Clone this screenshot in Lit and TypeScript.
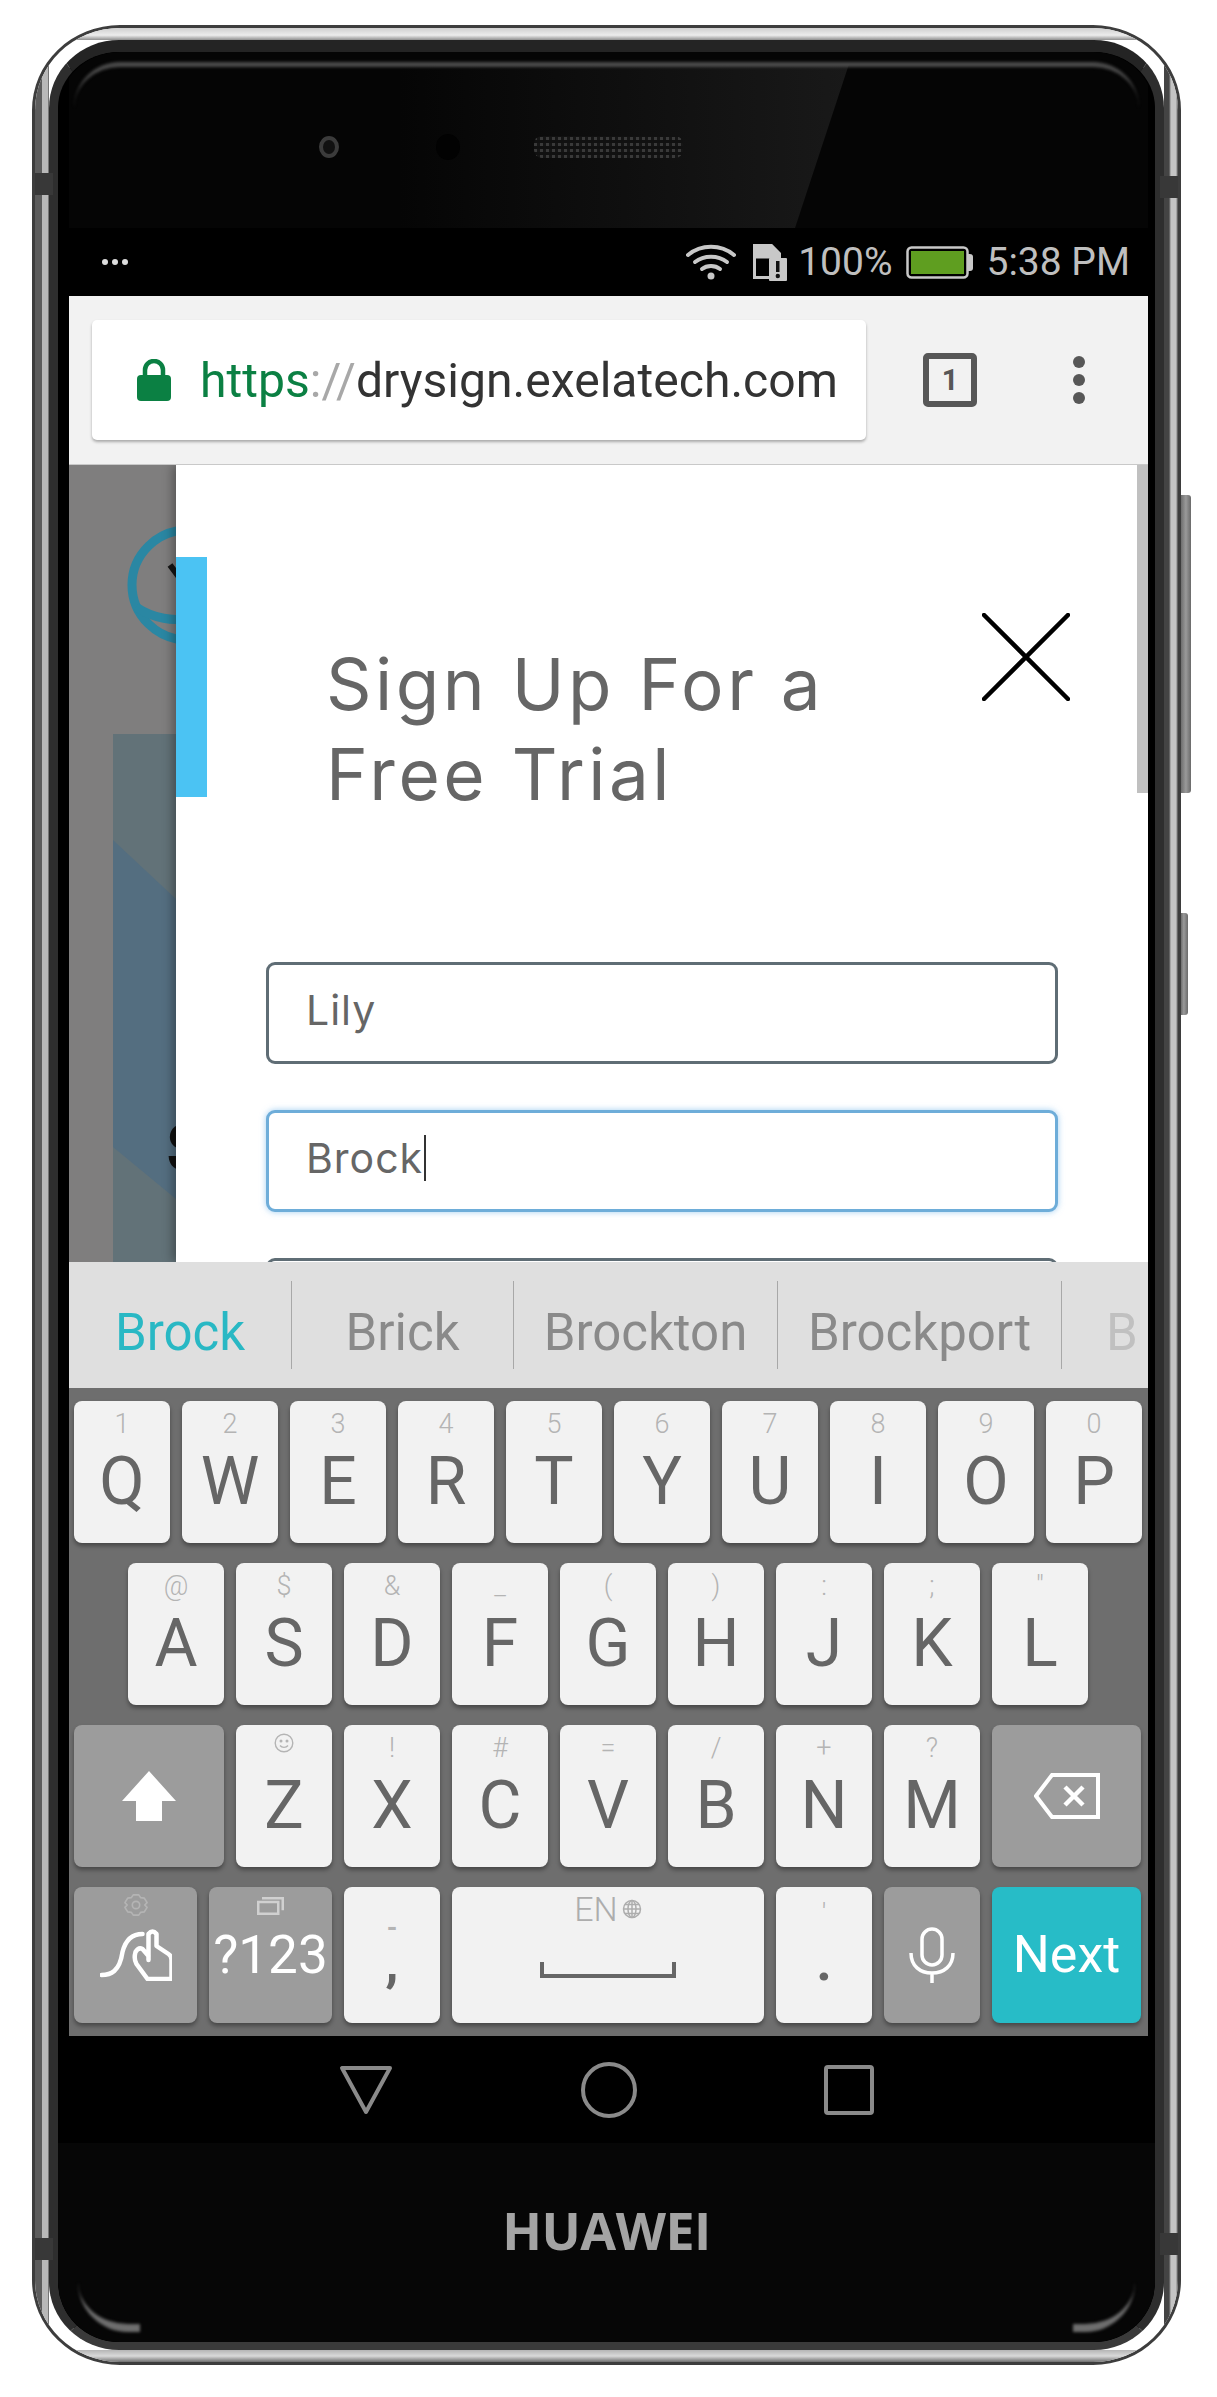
import { LitElement, css, html, svg } from 'lit'
import { customElement } from 'lit/decorators.js'

type Key = { main: string; hint: string }

const toKeys = (mains: string, hints: string[]): Key[] =>
  mains.split('').map((main, i) => ({ main, hint: hints[i] }))

const ROW_1 = toKeys('QWERTYUIOP', ['1', '2', '3', '4', '5', '6', '7', '8', '9', '0'])
const ROW_2 = toKeys('ASDFGHJKL', ['@', '$', '&', '_', '(', ')', ':', ';', '"'])
const ROW_3 = toKeys('ZXCVBNM', ['', '!', '#', '=', '/', '+', '?'])

const SUGGESTIONS = [
  { word: 'Brock', width: 223, active: true },
  { word: 'Brick', width: 222 },
  { word: 'Brockton', width: 264 },
  { word: 'Brockport', width: 284 },
]

// dark breaks in the metal frame
const ANTENNA_BANDS = ['left:0;top:145px', 'right:0;top:148px', 'left:0;top:2210px', 'right:0;top:2205px']

const icons = {
  wifi: svg`<svg width="50" height="36" viewBox="0 0 50 36" fill="none" stroke="#c8c8c8" stroke-width="4" stroke-linecap="round"><path d="M2 11c13-11 33-11 46 0"/><path d="M9 18c9-7 23-7 32 0"/><path d="M16 25c5-4 13-4 18 0"/><circle cx="25" cy="32" r="3.500" fill="#c8c8c8" stroke="none"/></svg>`,
  sim: svg`<svg width="34" height="37" viewBox="0 0 34 37" fill="none"><path d="M1.500 1.500h17l8 8v24h-25z" stroke="#c8c8c8" stroke-width="3" fill="none"/><path d="M1.500 1.500h17l8 8v5h-25z" fill="#c8c8c8"/><rect x="16" y="14" width="18" height="23" rx="1" fill="#c8c8c8"/><rect x="23" y="17" width="3.500" height="11" fill="#111"/><circle cx="24.800" cy="32" r="2.200" fill="#111"/></svg>`,
  battery: svg`<svg width="68" height="33" viewBox="0 0 68 33" fill="none"><rect x="1.500" y="1.500" width="60" height="30" rx="4" stroke="#c8c8c8" stroke-width="2.500" fill="#000"/><rect x="5" y="5" width="53" height="23" fill="#5f9e20"/><path d="M62 8h2a3 3 0 0 1 3 3v11a3 3 0 0 1-3 3h-2z" fill="#c8c8c8"/></svg>`,
  lock: svg`<svg width="34" height="42" viewBox="0 0 34 42"><path d="M8 17v-6a9 9 0 0 1 18 0v6" fill="none" stroke="#0b8043" stroke-width="4.500"/><rect x="0" y="16" width="34" height="26" rx="4" fill="#0b8043"/></svg>`,
  close: svg`<svg width="88" height="88" viewBox="0 0 88 88" stroke="#000" stroke-width="4.500" stroke-linecap="round"><path d="M2 2l84 84M86 2L2 86"/></svg>`,
  shift: svg`<svg width="54" height="50" viewBox="0 0 54 50" fill="#fff"><path d="M27 0l27 30H40v20H14V30H0z"/></svg>`,
  backspace: svg`<svg width="66" height="46" viewBox="0 0 66 46" fill="none" stroke="#fff" stroke-width="4"><path d="M64 2H18L2 23l16 21h46z"/><path d="M31 14l18 18M49 14L31 32" stroke-width="4.500"/></svg>`,
  swipe: svg`<svg width="72" height="52" viewBox="-0.500 -1 72 52" fill="none" stroke="#fff" stroke-width="4.500" stroke-linejoin="round" stroke-linecap="round"><path d="M1 45c9 0 18-3 21-23 3-12 10-18 20-18"/><path d="M48 30V4q4-5 8 0v12l12 8q3 2 3 6v19H47L36 34q-3-5-1-12 3-5 7-3l6 7"/></svg>`,
  gear: svg`<svg width="24" height="24" viewBox="-1 -1 26 26" fill="none" stroke="#b4b4b4" stroke-width="1.800" stroke-linejoin="round"><path d="M9 1h6l2 3 4 .5 3 5-2.500 2.500 2.500 2.500-3 5-4 .5-2 3H9l-2-3-4-.5-3-5L2.500 12 0 9.500l3-5 4-.5z"/><circle cx="12" cy="12" r="4"/></svg>`,
  windows: svg`<svg width="27" height="18" viewBox="0 0 27 18" fill="none" stroke="#d0d0d0" stroke-width="2.500"><rect x="1.250" y="5" width="20" height="11.750"/><path d="M5 1.250h20.750v12"/></svg>`,
  globe: svg`<svg width="20" height="20" viewBox="0 0 20 20" fill="none" stroke="#adadad" stroke-width="1.500"><circle cx="10" cy="10" r="8.500"/><ellipse cx="10" cy="10" rx="4" ry="8.500"/><path d="M10 1.500v17M1.500 10h17M3 5.500h14M3 14.500h14"/></svg>`,
  smiley: svg`<svg width="20" height="20" viewBox="0 0 20 20" fill="none" stroke="#b4b4b4" stroke-width="1.400"><circle cx="10" cy="10" r="8.800"/><circle cx="7" cy="8" r=".8"/><circle cx="13" cy="8" r=".8"/><path d="M6 12.500c2 2.500 6 2.500 8 0"/></svg>`,
  spacebar: svg`<svg width="136" height="16" viewBox="0 0 136 16" fill="none" stroke="#666" stroke-width="4"><path d="M2 0v14h132V0"/></svg>`,
  mic: svg`<svg width="46" height="56" viewBox="0 0 46 56" fill="none" stroke="#fff" stroke-width="3.500"><rect x="13" y="2" width="20" height="36" rx="10"/><path d="M2 26c0 13 9 20 21 20s21-7 21-20M23 46v10"/></svg>`,
  back: svg`<svg width="54" height="50" viewBox="0 0 54 50" fill="none" stroke="#8a8a8a" stroke-width="4" stroke-linejoin="round"><path d="M3 3h48L27 47z"/></svg>`,
  home: svg`<svg width="56" height="56" viewBox="0 0 56 56" fill="none" stroke="#8a8a8a" stroke-width="4"><circle cx="28" cy="28" r="26"/></svg>`,
  recent: svg`<svg width="50" height="50" viewBox="0 0 50 50" fill="none" stroke="#8a8a8a" stroke-width="4" stroke-linejoin="round"><rect x="2" y="2" width="46" height="46" rx="2"/></svg>`,
  logo: svg`<svg width="120" height="122" viewBox="0 0 120 122" fill="none" stroke="#2a87a3" stroke-width="9"><ellipse cx="62" cy="60" rx="56" ry="55"/><path d="M10 82c18 12 36 14 60 12"/><path d="M44 40l6 8 6-8" stroke="#151515" stroke-width="6"/></svg>`,
}

@customElement('app-root')
export class AppRoot extends LitElement {
  static styles = css`
    :host {
      display: block;
      width: 1217px;
      height: 2397px;
      background: #fff;
      font-family: Roboto, 'Liberation Sans', sans-serif;
      overflow: hidden;
    }
    .canvas {
      position: relative;
      box-sizing: border-box;
      height: 2397px;
      padding: 25px 0 0 32px;
    }
    .side-btn {
      position: absolute;
      left: 1174px;
      border-radius: 3px;
      background: linear-gradient(90deg, #444 0 7px, #6e6e6e 7px, #9a9a9a 70%, #6a6a6a);
    }
    .side-btn.upper { top: 495px; height: 298px; width: 17px; }
    .side-btn.lower { top: 913px; height: 102px; width: 14px; }
    .phone {
      position: relative;
      width: 1149px;
      height: 2340px;
      box-sizing: border-box;
      border: 3px solid #3d3d3d;
      border-radius: 88px / 85px;
      overflow: hidden;
    }
    .rim {
      height: 100%;
      box-sizing: border-box;
      padding: 12px 14px;
      background:
        linear-gradient(180deg, #cfcfcf, #ececec 60%, #8f8f8f) top / 100% 12px no-repeat,
        linear-gradient(0deg, #6f6f6f, #d9d9d9 50%, #b5b5b5) bottom / 100% 12px no-repeat,
        linear-gradient(90deg, #5c5c5c 0 7px, #b8b8b8 7px 13px, #333 14px) left / 14px 100% no-repeat,
        linear-gradient(90deg, #444 0 5px, #c4c4c4 7px 12px, #444 14px) right / 14px 100% no-repeat;
    }
    .band {
      position: absolute;
      width: 18px;
      height: 22px;
      background: #383838;
    }
    .bevel {
      height: 100%;
      box-sizing: border-box;
      border-style: solid;
      border-width: 12px 9px 8px;
      border-color: #242424 #2e2e2e #3a3a3a;
      border-radius: 70px / 68px;
      overflow: hidden;
      background: #000;
    }
    .body {
      position: relative;
      height: 100%;
      padding: 0 7px 0 11px;
      background: #000;
      border-radius: 62px / 60px;
      display: flex;
      flex-direction: column;
      overflow: hidden;
    }
    .gloss {
      position: absolute;
      filter: blur(1.500px);
    }
    .gloss.top {
      left: 16px;
      right: 16px;
      top: 10px;
      height: 50px;
      border-top: 5px solid #4a4a4a;
      border-radius: 46px 46px 0 0;
    }
    .gloss.bottom-left,
    .gloss.bottom-right {
      bottom: 10px;
      width: 62px;
      height: 48px;
      border-bottom: 8px solid #6e6e6e;
    }
    .gloss.bottom-left { left: 20px; border-bottom-left-radius: 50px; }
    .gloss.bottom-right { right: 20px; border-bottom-right-radius: 50px; }
    .earpiece {
      position: relative;
      height: 176px;
      flex: none;
      box-sizing: border-box;
      padding-top: 14px;
      display: flex;
      align-items: center;
      background: #050505;
    }
    .glare {
      position: absolute;
      left: 330px;
      top: 12px;
      width: 450px;
      height: 164px;
      clip-path: polygon(0 0, 100% 0, 88% 100%, 0 100%);
      background: linear-gradient(90deg, rgba(30, 30, 30, 0), #191919);
    }
    .lens {
      position: relative;
      width: 20px;
      height: 22px;
      margin-left: 250px;
      border-radius: 50%;
      border: 4px solid #3b3b3b;
      background: #111;
      box-sizing: border-box;
    }
    .sensor {
      position: relative;
      width: 24px;
      height: 26px;
      margin-left: 97px;
      border-radius: 50%;
      background: #020202;
    }
    .grille {
      position: relative;
      width: 149px;
      height: 22px;
      margin-left: 74px;
      border-radius: 8px;
      background:
        repeating-linear-gradient(0deg, transparent 0 3px, #111 3px 6px),
        repeating-linear-gradient(90deg, #3a3a3a 0 3px, #151515 3px 6px);
    }
    .status {
      height: 68px;
      flex: none;
      box-sizing: border-box;
      display: flex;
      align-items: center;
      color: #bfbfbf;
      font-size: 39px;
      font-weight: 400;
      padding: 0 18px 0 33px;
      white-space: nowrap;
    }
    .dots {
      flex: 1;
      display: flex;
      gap: 4px;
    }
    .dots span {
      width: 6px;
      height: 6px;
      border-radius: 50%;
      background: #ddd;
    }
    .status svg { display: block; }
    .status .sim { margin: 0 11px 0 17px; }
    .status .battery { margin: 0 12px 0 14px; }
    .chrome {
      height: 169px;
      flex: none;
      box-sizing: border-box;
      padding: 0 0 0 23px;
      display: flex;
      align-items: center;
      background: #f2f2f2;
      border-bottom: 1px solid #c9c9c9;
    }
    .omnibox {
      width: 774px;
      height: 120px;
      box-sizing: border-box;
      padding: 0 0 0 45px;
      display: flex;
      align-items: center;
      background: #fff;
      border-radius: 5px;
      box-shadow: 0 2px 3px rgba(0, 0, 0, 0.3);
      font-size: 48.100px;
      color: #333;
      white-space: nowrap;
    }
    .omnibox svg { margin-right: 29px; flex: none; }
    .scheme { color: #0b8043; }
    .slashes { color: #a8a8a8; }
    .tabs {
      margin-left: 57px;
      width: 54px;
      height: 54px;
      flex: none;
      box-sizing: border-box;
      border: 6px solid #575757;
      border-radius: 5px;
      display: flex;
      align-items: center;
      justify-content: center;
      color: #575757;
      font-size: 29px;
      font-weight: 700;
    }
    .menu {
      margin-left: 96px;
      display: flex;
      flex-direction: column;
      gap: 6px;
    }
    .menu span {
      width: 12px;
      height: 12px;
      border-radius: 50%;
      background: #575757;
    }
    .page {
      height: 797px;
      flex: none;
      display: flex;
      overflow: hidden;
    }
    .backdrop {
      position: relative;
      width: 107px;
      flex: none;
      overflow: hidden;
      background: #7f7e7e;
    }
    .logo {
      position: absolute;
      left: 57px;
      top: 60px;
    }
    .hero {
      position: absolute;
      left: 44px;
      top: 269px;
      width: 63px;
      height: 528px;
      background: #627278;
    }
    .hero-band {
      height: 100%;
      clip-path: polygon(0 106px, 100% 165px, 100% 465px, 0 413px);
      background: #546e80;
    }
    .hero-letter {
      position: absolute;
      left: 97px;
      top: 644px;
      color: #111;
      font-size: 63px;
      line-height: 76px;
      font-weight: 700;
      font-family: Inter, sans-serif;
    }
    .modal {
      flex: 1;
      display: flex;
      background: #fff;
      position: relative;
      box-shadow: -3px 0 10px rgba(0, 0, 0, 0.35);
    }
    .strip {
      width: 31px;
      height: 240px;
      margin-top: 92px;
      flex: none;
      background: #4bc3f3;
    }
    .scrollbar {
      position: absolute;
      right: 0;
      top: 0;
      width: 11px;
      height: 328px;
      background: #c0c0c0;
    }
    .modal-body {
      flex: 1;
      padding: 0 0 0 59px;
    }
    .heading-row {
      display: flex;
      align-items: flex-start;
      height: 497px;
      box-sizing: border-box;
      padding: 174px 0 0 60px;
    }
    .heading-row h1 {
      flex: 1;
      margin: 0;
      font-weight: 400;
      font-size: 71px;
      line-height: 90px;
      letter-spacing: 3.500px;
      color: #666;
      font-family: Inter, sans-serif;
    }
    .close {
      margin: -26px 78px 0 0;
      display: block;
    }
    .field {
      width: 792px;
      height: 102px;
      box-sizing: border-box;
      margin-bottom: 46px;
      padding: 0 0 6px 37px;
      display: flex;
      align-items: center;
      background: #fff;
      border: 3px solid #5f6d75;
      border-radius: 9px;
      color: #666;
      font-size: 41px;
      letter-spacing: 1px;
      font-family: Inter, sans-serif;
      font-weight: 400;
    }
    .field.focused {
      border-color: #6eadd9;
      box-shadow: 0 0 6px rgba(102, 175, 233, 0.6);
    }
    .caret {
      width: 2px;
      height: 46px;
      background: #333;
      margin-left: 1px;
    }
    .suggestions {
      height: 126px;
      flex: none;
      box-sizing: border-box;
      padding: 19px 0;
      display: flex;
      background: #dfdfdf;
      font-size: 51px;
      color: #8a8a8a;
      overflow: hidden;
    }
    .suggestion {
      flex: none;
      display: flex;
      align-items: center;
      justify-content: center;
      box-sizing: border-box;
      padding-top: 14px;
      border-right: 1px solid #a8a8a8;
    }
    .suggestion.active { color: #29b8c4; }
    .suggestion.fade {
      justify-content: flex-start;
      padding-left: 44px;
      width: 86px;
      border: 0;
      color: #c0c0c0;
    }
    .keyboard {
      height: 648px;
      flex: none;
      box-sizing: border-box;
      padding: 13px 5px 0;
      background: #6e6e6e;
      display: flex;
      flex-direction: column;
      gap: 20px;
    }
    .row {
      display: flex;
      gap: 12px;
      height: 142px;
    }
    .row.inset { padding-left: 54px; }
    .row.bottom { height: 136px; }
    .key {
      position: relative;
      width: 96px;
      flex: none;
      display: flex;
      flex-direction: column;
      align-items: center;
      justify-content: flex-end;
      box-sizing: border-box;
      padding-bottom: 23px;
      background: #f2f2f2;
      border-radius: 8px;
      box-shadow: 0 3px 4px rgba(0, 0, 0, 0.35);
      color: #666;
      font-size: 66px;
      line-height: 76px;
    }
    .key .hint {
      position: absolute;
      top: 7px;
      left: 0;
      right: 0;
      display: flex;
      justify-content: center;
      font-size: 27px;
      line-height: 32px;
      color: #b4b4b4;
      font-weight: 300;
    }
    .key .hint svg { margin-top: 1px; }
    .key .hint.dash { top: 31px; line-height: 20px; font-weight: 700; }
    .key .hint.tick { top: 11px; }
    .key.fn {
      background: #9c9c9c;
      color: #fff;
      justify-content: center;
      padding-bottom: 0;
    }
    .key.wide { width: 149px; }
    .key.shift { width: 150px; }
    .key.half { width: 123px; }
    .key.space { width: 312px; padding-bottom: 45px; }
    .key.next {
      width: 149px;
      background: #27bcc7;
      color: #fff;
      font-size: 52px;
      justify-content: center;
      padding-bottom: 0;
    }
    .hint-icon {
      position: absolute;
      top: 6px;
      left: 0;
      right: 0;
      display: flex;
      justify-content: center;
    }
    .hint-icon.windows { top: 10px; }
    .key.sym {
      font-size: 54px;
      font-weight: 700;
      line-height: 40px;
      padding-bottom: 41px;
    }
    .key.num { font-size: 53px; }
    .space-hint {
      position: absolute;
      top: 4px;
      left: 0;
      right: 0;
      display: flex;
      justify-content: center;
      align-items: center;
      gap: 4px;
      color: #adadad;
      font-size: 34px;
      font-weight: 300;
      line-height: 36px;
    }
    .nav {
      height: 107px;
      flex: none;
      display: flex;
      align-items: center;
      justify-content: center;
    }
    .nav .back { margin: 0 0 0 -5px; }
    .nav .home { margin: 0 0 0 188px; }
    .nav .recent { margin: 0 0 0 187px; }
    .nav svg { display: block; }
    .chin {
      flex: 1;
      display: flex;
      justify-content: center;
      margin: 0 -7px 0 -11px;
      padding-top: 68px;
      background: #060606;
    }
    .brand {
      color: #a4a4a4;
      font-size: 52px;
      line-height: 38px;
      font-weight: 700;
      font-family: 'Open Sans', 'Liberation Sans', sans-serif;
      letter-spacing: -0.500px;
    }
  `

  private renderKey(key: Key) {
    return html`<div class="key"><span class="hint">${key.hint || icons.smiley}</span>${key.main}</div>`
  }

  render() {
    return html`
      <div class="canvas">
        <div class="side-btn upper"></div>
        <div class="side-btn lower"></div>
        <div class="phone">
          <div class="rim">
            <div class="bevel">
              <div class="body">
                <div class="earpiece">
                  <div class="glare"></div>
                  <div class="lens"></div>
                  <div class="sensor"></div>
                  <div class="grille"></div>
                </div>
                <div class="status">
                  <div class="dots"><span></span><span></span><span></span></div>
                  ${icons.wifi}
                  <span class="sim">${icons.sim}</span>
                  <span>100%</span>
                  <span class="battery">${icons.battery}</span>
                  <span>5:38 PM</span>
                </div>
                <div class="chrome">
                  <div class="omnibox">
                    ${icons.lock}
                    <span><span class="scheme">https</span><span class="slashes">://</span>drysign.exelatech.com</span>
                  </div>
                  <div class="tabs">1</div>
                  <div class="menu"><span></span><span></span><span></span></div>
                </div>
                <div class="page">
                  <div class="backdrop">
                    <span class="logo">${icons.logo}</span>
                    <div class="hero"><div class="hero-band"></div></div>
                    <div class="hero-letter">S</div>
                  </div>
                  <div class="modal">
                    <div class="strip"></div>
                    <div class="modal-body">
                      <div class="heading-row">
                        <h1>Sign Up For a<br />Free Trial</h1>
                        <span class="close">${icons.close}</span>
                      </div>
                      <div class="field">Lily</div>
                      <div class="field focused">Brock<span class="caret"></span></div>
                      <div class="field"></div>
                    </div>
                    <div class="scrollbar"></div>
                  </div>
                </div>
                <div class="suggestions">
                  ${SUGGESTIONS.map(
                    (s) => html`<div
                      class="suggestion ${s.active ? 'active' : ''}"
                      style="width:${s.width}px"
                    >${s.word}</div>`
                  )}
                  <div class="suggestion fade">B</div>
                </div>
                <div class="keyboard">
                  <div class="row">${ROW_1.map((k) => this.renderKey(k))}</div>
                  <div class="row inset">${ROW_2.map((k) => this.renderKey(k))}</div>
                  <div class="row">
                    <div class="key fn shift">${icons.shift}</div>
                    ${ROW_3.map((k) => this.renderKey(k))}
                    <div class="key fn wide">${icons.backspace}</div>
                  </div>
                  <div class="row bottom">
                    <div class="key fn half">
                      <span class="hint-icon">${icons.gear}</span>${icons.swipe}
                    </div>
                    <div class="key fn half num">
                      <span class="hint-icon windows">${icons.windows}</span>?123
                    </div>
                    <div class="key sym"><span class="hint dash">-</span>,</div>
                    <div class="key space">
                      <span class="space-hint">EN ${icons.globe}</span>
                      ${icons.spacebar}
                    </div>
                    <div class="key sym"><span class="hint tick">'</span>.</div>
                    <div class="key fn">${icons.mic}</div>
                    <div class="key next">Next</div>
                  </div>
                </div>
                <div class="nav">
                  <span class="back">${icons.back}</span>
                  <span class="home">${icons.home}</span>
                  <span class="recent">${icons.recent}</span>
                </div>
                <div class="chin"><div class="brand">HUAWEI</div></div>
                <div class="gloss top"></div>
                <div class="gloss bottom-left"></div>
                <div class="gloss bottom-right"></div>
              </div>
            </div>
          </div>
          ${ANTENNA_BANDS.map((pos) => html`<div class="band" style=${pos}></div>`)}
        </div>
      </div>
    `
  }
}

declare global {
  interface HTMLElementTagNameMap {
    'app-root': AppRoot
  }
}
